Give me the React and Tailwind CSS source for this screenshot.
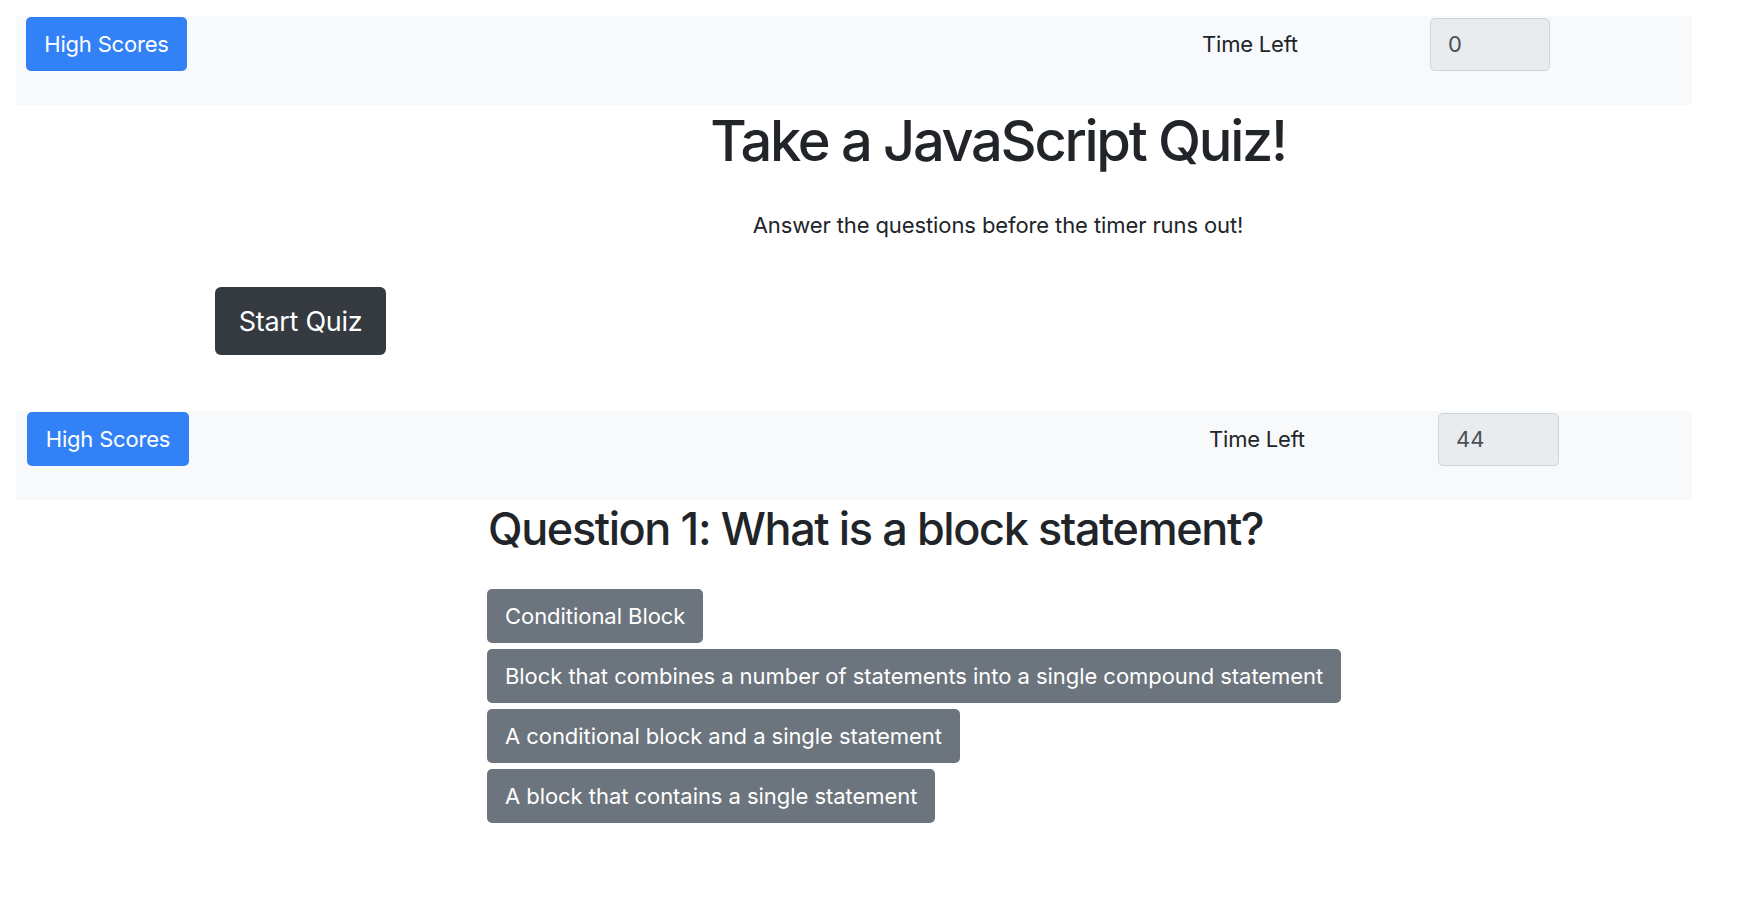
export default function App() {
  const answers = [
    "Conditional Block",
    "Block that combines a number of statements into a single compound statement",
    "A conditional block and a single statement",
    "A block that contains a single statement",
  ];
  return (
    <div className="font-['Inter',sans-serif] text-[#212529] bg-white min-h-[910px]">
      {/* Navbar 1 */}
      <div className="ml-[16px] mt-[16px] w-[1676px] h-[89px] bg-[#f8f9fa] flex items-start pl-[10px] pt-[1px]">
        <button className="h-[54px] px-[18px] bg-[#3381f6] text-white text-[22px] tracking-[-0.2px] rounded-[5px] leading-none w-[161px]">
          High Scores
        </button>
        <div className="flex-1" />
        <div className="flex items-center h-[53px] mt-[1px]">
          <span className="w-[228px] text-[22px] tracking-[-0.2px]">Time Left</span>
          <div className="w-[120px] h-[53px] bg-[#e9ecef] border border-[#ced4da] rounded-[5px] flex items-center pl-[17px] text-[22px] text-[#495057]">
            0
          </div>
        </div>
        <div className="w-[142px]" />
      </div>

      {/* Intro section */}
      <div className="pl-[256px] pt-[3px] text-center">
        <h1 className="text-[56px] leading-[1.2] font-medium tracking-[-2.3px]">
          Take a JavaScript Quiz!
        </h1>
        <p className="mt-[34px] text-[22px] leading-[33px] font-normal tracking-[-0.1px]">
          Answer the questions before the timer runs out!
        </p>
      </div>
      <div className="pl-[215px] mt-[45px]">
        <button className="w-[171px] h-[68px] bg-[#343a40] text-white text-[27px] tracking-[-0.3px] rounded-[6px] leading-none">
          Start Quiz
        </button>
      </div>

      {/* Navbar 2 */}
      <div className="ml-[16px] mt-[56px] w-[1676px] h-[89px] bg-[#f8f9fa] flex items-start pl-[11px] pt-[1px]">
        <button className="h-[54px] px-[18px] bg-[#3381f6] text-white text-[22px] tracking-[-0.2px] rounded-[5px] leading-none w-[162px]">
          High Scores
        </button>
        <div className="flex-1" />
        <div className="flex items-center h-[53px] mt-[1px]">
          <span className="w-[229px] text-[22px] tracking-[-0.2px]">Time Left</span>
          <div className="w-[121px] h-[53px] bg-[#e9ecef] border border-[#ced4da] rounded-[5px] flex items-center pl-[17px] text-[22px] text-[#495057]">
            44
          </div>
        </div>
        <div className="w-[133px]" />
      </div>

      {/* Question */}
      <div className="pl-[487px] pt-[2px]">
        <h2 className="text-[45px] leading-[1.2] font-medium tracking-[-1.4px] pl-[1px]">
          Question 1: What is a block statement?
        </h2>
        <div className="mt-[33px] flex flex-col items-start gap-[6px]">
          {answers.map((a) => (
            <button
              key={a}
              className="h-[54px] px-[18px] bg-[#6c757d] text-white text-[22px] tracking-[-0.05px] rounded-[5px] leading-none whitespace-nowrap"
            >
              {a}
            </button>
          ))}
        </div>
      </div>
    </div>
  );
}
